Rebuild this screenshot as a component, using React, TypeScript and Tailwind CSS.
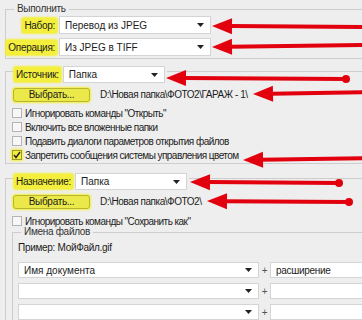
import React from "react";

const FONT = "font-['Liberation_Sans',sans-serif]";

function Caret() {
  return (
    <svg width="7" height="4" viewBox="0 0 7 4" className="shrink-0">
      <path d="M0 0h7L3.5 4z" fill="#222" />
    </svg>
  );
}

function Select({ text, w, h = 18 }: { text: string; w: string; h?: number }) {
  return (
    <div
      className={`flex ${w} items-center justify-between border border-[#d4d4d4] bg-white pr-[6px] pl-[5px]`}
      style={{ height: h }}
    >
      <span className="tracking-normal">{text}</span>
      <Caret />
    </div>
  );
}

function Mark({ children }: { children: React.ReactNode }) {
  return (
    <span className="rounded-[2px] bg-[#f3ef3c] px-[2px] shadow-[0_0_2px_1px_#f3ef3c]">{children}</span>
  );
}

function PickButton({ path }: { path: string }) {
  return (
    <div className="flex items-center gap-[10px] pl-[7px]">
      <div className="flex h-[14px] w-[77px] items-center justify-center rounded-[3px] border border-[#b9b52e] bg-[#ebe84a] shadow-[0_0_2px_1px_#f3ef3c]">
        Выбрать...
      </div>
      <span className="tracking-[-0.45px]">{path}</span>
    </div>
  );
}

function Check({ label, on = false }: { label: string; on?: boolean }) {
  return (
    <div className="flex h-[14px] items-center gap-[3px] pl-[6px]">
      <div
        className={`flex h-[10px] w-[10px] items-center justify-center border ${
          on ? "border-[#9c9a2a] bg-[#f3ef3c] shadow-[0_0_2px_1px_#f3ef3c]" : "border-[#b4b4b4] bg-[#f7f7f7]"
        }`}
      >
        {on && (
          <svg width="8" height="8" viewBox="0 0 8 8">
            <path d="M1 4l2 2.5L7 1" stroke="#222" strokeWidth="1.4" fill="none" />
          </svg>
        )}
      </div>
      <span className="tracking-[-0.55px]">{label}</span>
    </div>
  );
}

const arrows = [
  { x1: 212, y1: 26, x2: 370, y2: 27, dot: false },
  { x1: 212, y1: 47, x2: 370, y2: 45, dot: false },
  { x1: 166, y1: 78, x2: 346, y2: 79, dot: true },
  { x1: 253, y1: 94, x2: 370, y2: 92, dot: false },
  { x1: 243, y1: 160, x2: 370, y2: 158, dot: false },
  { x1: 190, y1: 182, x2: 339, y2: 183, dot: true },
  { x1: 207, y1: 201, x2: 349, y2: 202, dot: true },
];

function Arrows() {
  return (
    <svg width="362" height="320" className="pointer-events-none absolute inset-0">
      {arrows.map((a, i) => {
        const dx = a.x2 - a.x1;
        const dy = a.y2 - a.y1;
        const len = Math.hypot(dx, dy);
        const ux = dx / len;
        const uy = dy / len;
        const hl = 20;
        const hw = 8;
        const bx = a.x1 + ux * hl;
        const by = a.y1 + uy * hl;
        const pts = `${a.x1},${a.y1} ${bx - uy * hw},${by + ux * hw} ${bx + uy * hw},${by - ux * hw}`;
        return (
          <g key={i}>
            <line x1={bx - ux * 2} y1={by - uy * 2} x2={a.x2} y2={a.y2} stroke="#e2000f" strokeWidth="4" />
            <polygon points={pts} fill="#e2000f" />
            {a.dot && <circle cx={a.x2} cy={a.y2} r="4" fill="#e2000f" />}
          </g>
        );
      })}
    </svg>
  );
}

export default function App() {
  return (
    <div
      className={`relative h-[320px] w-[362px] overflow-hidden bg-[#eeeeee] text-[10px] tracking-[-0.3px] text-[#1c1c1c] ${FONT}`}
    >
      <div className="w-[420px] pt-[9px] pl-[5px]">
        {/* Выполнить */}
        <div className="border border-[#cdcdcd] pb-[2px]">
          <div className="-mt-[7px] ml-[8px] w-fit bg-[#eeeeee] px-[3px] leading-[12px] text-[#333]">Выполнить</div>
          <div className="mt-[1px] flex flex-col gap-[4px]">
            <div className="flex items-center gap-[2px]">
              <div className="flex w-[51px] justify-end">
                <Mark>Набор:</Mark>
              </div>
              <Select text="Перевод из JPEG" w="w-[152px]" />
            </div>
            <div className="flex items-center gap-[2px]">
              <div className="flex w-[51px] justify-end">
                <Mark>Операция:</Mark>
              </div>
              <Select text="Из JPEG в TIFF" w="w-[152px]" />
            </div>
          </div>
        </div>

        {/* Источник */}
        <div className="mt-[12px] border border-[#cdcdcd] pb-[1px]">
          <div className="-mt-[6px] ml-[8px] flex w-fit items-center gap-[2px] bg-[#eeeeee] pr-[2px]">
            <Mark>Источник:</Mark>
            <Select text="Папка" w="w-[102px]" h={17} />
          </div>
          <div className="mt-[4px]">
            <PickButton path="D:\Новая папка\ФОТО2\ГАРАЖ - 1\" />
          </div>
          <div className="mt-[4px]">
            <Check label={'Игнорировать команды "Открыть"'} />
            <Check label="Включить все вложенные папки" />
            <Check label="Подавить диалоги параметров открытия файлов" />
            <Check label="Запретить сообщения системы управления цветом" on />
          </div>
        </div>

        {/* Назначение */}
        <div className="mt-[14px] border border-[#cdcdcd] pb-[20px]">
          <div className="-mt-[6px] ml-[8px] flex w-fit items-center gap-[2px] bg-[#eeeeee] pr-[2px]">
            <Mark>Назначение:</Mark>
            <Select text="Папка" w="w-[112px]" h={17} />
          </div>
          <div className="mt-[4px]">
            <PickButton path="D:\Новая папка\ФОТО2\" />
          </div>
          <div className="mt-[5px]">
            <Check label={'Игнорировать команды "Сохранить как"'} />
          </div>

          {/* Имена файлов */}
          <div className="mt-[4px] ml-[6px] border border-[#cdcdcd]">
            <div className="-mt-[7px] ml-[8px] w-fit bg-[#eeeeee] px-[3px] leading-[12px] text-[#333]">Имена файлов</div>
            <div className="mt-[4px] pl-[5px] leading-[12px]">Пример: МойФайл.gif</div>
            <div className="mt-[8px] flex flex-col gap-[5px] pl-[5px]">
              {["Имя документа", "", ""].map((t, i) => (
                <div key={i} className="flex items-center">
                  <Select text={t} w="w-[241px]" h={16} />
                  <span className="w-[11px] text-center text-[#555]">+</span>
                  <div className="flex h-[16px] w-[120px] items-center border border-[#d4d4d4] bg-white pl-[5px]">
                    {i === 0 ? "расширение" : ""}
                  </div>
                </div>
              ))}
            </div>
          </div>
        </div>
      </div>
      <Arrows />
    </div>
  );
}
